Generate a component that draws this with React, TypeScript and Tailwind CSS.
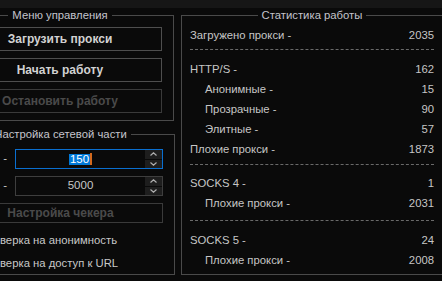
import React from "react";

const font = { fontFamily: '"Liberation Sans", Arial, sans-serif' };

function Btn({ label, disabled, h = "h-[24px]" }: { label: string; disabled?: boolean; h?: string }) {
  return (
    <div
      className={`${h} flex items-center justify-center border text-[12px] font-bold ${
        disabled ? "border-[#3a3a3a] text-[#4a4a4a]" : "border-[#4e4e4e] text-[#d2d2d2]"
      }`}
    >
      {label}
    </div>
  );
}

function Spin({ value, focused }: { value: string; focused?: boolean }) {
  return (
    <div className="flex items-center h-[20px]">
      <div className="w-[57px] text-right pr-[8px] text-[11.5px] text-[#c8c8c8]">-</div>
      <div
        className={`flex h-[20px] w-[148px] border ${
          focused ? "border-[#0a6fd0]" : "border-[#3e3e3e]"
        }`}
      >
        <div className="flex-1 flex items-center justify-center text-[11.5px] text-[#c8c8c8]">
          {focused ? (
            <span className="flex items-center">
              <span className="bg-[#0078d7] text-white px-[1px] leading-[11px] h-[11px]">{value}</span>
              <span className="w-[2px] h-[12px] bg-[#d2691e]" />
            </span>
          ) : (
            value
          )}
        </div>
        <div className="w-[17px] flex flex-col gap-[1px] bg-[#0a0a0a]">
          <div className="flex-1 bg-[#1e1e1e] flex items-center justify-center">
            <svg width="7" height="4" viewBox="0 0 7 4">
              <path d="M0.5 3.5 L3.5 0.8 L6.5 3.5" stroke="#b0b0b0" strokeWidth="1.2" fill="none" />
            </svg>
          </div>
          <div className="flex-1 bg-[#1e1e1e] flex items-center justify-center">
            <svg width="7" height="4" viewBox="0 0 7 4">
              <path d="M0.5 0.5 L3.5 3.2 L6.5 0.5" stroke="#b0b0b0" strokeWidth="1.2" fill="none" />
            </svg>
          </div>
        </div>
      </div>
    </div>
  );
}

function Row({ label, value, indent }: { label: string; value: string; indent?: boolean }) {
  return (
    <div className={`h-[20px] flex items-center justify-between text-[11.3px] text-[#c6c6c6] ${indent ? "pl-[15px]" : ""}`}>
      <span>{label}</span>
      <span>{value}</span>
    </div>
  );
}

function Sep({ h, top }: { h: string; top: string }) {
  return (
    <div className={`${h} ${top}`}>
      <div className="border-t border-dashed border-[#6a6a6a]" />
    </div>
  );
}

export default function App() {
  return (
    <div className="w-[442px] h-[281px] overflow-hidden bg-[#0a0a0a]" style={font}>
      <div className="h-[8px] bg-[#161616]" />
      <div className="flex">
        {/* Left column */}
        <div className="w-[228px] ml-[-54px] shrink-0 flex flex-col gap-[6px]">
          <fieldset className="border border-[#4a4a4a] px-[11px] pb-[7px]">
            <legend className="mx-auto px-[4px] text-[11.3px] leading-[14px] text-[#c4c4cc]">Меню управления</legend>
            <div className="flex flex-col gap-[7px] pt-[5px]">
              <Btn label="Загрузить прокси" />
              <Btn label="Начать работу" />
              <Btn label="Остановить работу" disabled />
            </div>
          </fieldset>
          <fieldset className="border border-[#4a4a4a] px-[11px] h-[148px]">
            <legend className="mx-auto px-[4px] text-[11.3px] leading-[14px] text-[#c4c4cc]">Настройка сетевой части</legend>
            <div className="flex flex-col gap-[7px] pt-[8px]">
              <Spin value="150" focused />
              <Spin value="5000" />
              <Btn label="Настройка чекера" disabled h="h-[20px]" />
            </div>
            <div className="ml-[42px] pt-[6px] text-[11.3px] text-[#c8c8c8]">
              <div className="h-[23px] flex items-center">верка на анонимность</div>
              <div className="h-[23px] flex items-center">верка на доступ к URL</div>
            </div>
          </fieldset>
        </div>

        {/* Right column */}
        <fieldset className="ml-[7px] w-[262px] shrink-0 border border-[#4a4a4a] px-[8px] h-[267px]">
          <legend className="mx-auto px-[4px] text-[11.3px] leading-[14px] text-[#c4c4cc]">Статистика работы</legend>
          <div className="pt-[3px]">
            <Row label="Загружено прокси -" value="2035" />
            <Sep h="h-[14px]" top="pt-[4px]" />
            <Row label="HTTP/S -" value="162" />
            <Row label="Анонимные -" value="15" indent />
            <Row label="Прозрачные -" value="90" indent />
            <Row label="Элитные -" value="57" indent />
            <Row label="Плохие прокси -" value="1873" />
            <Sep h="h-[14px]" top="pt-[5px]" />
            <Row label="SOCKS 4 -" value="1" />
            <Row label="Плохие прокси -" value="2031" indent />
            <Sep h="h-[17px]" top="pt-[7px]" />
            <Row label="SOCKS 5 -" value="24" />
            <Row label="Плохие прокси -" value="2008" indent />
          </div>
        </fieldset>
      </div>
    </div>
  );
}
